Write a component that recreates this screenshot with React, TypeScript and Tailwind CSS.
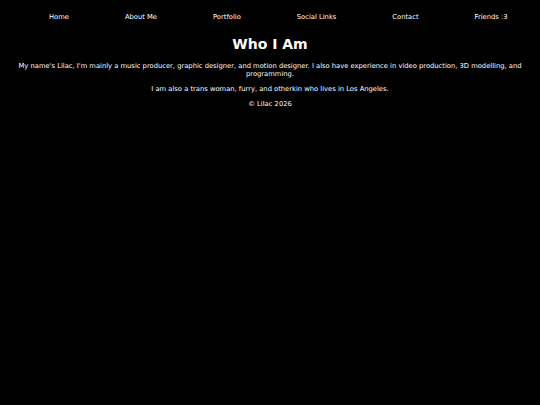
export default function App() {
  const links = ['Home', 'About Me', 'Portfolio', 'Social Links', 'Contact', 'Friends :3'];

  return (
    <div className="min-h-screen w-full bg-black text-white font-['Verdana','DejaVu_Sans',sans-serif]">
      {/* Nav */}
      <nav className="flex pl-[49px] pt-[13px] gap-[56px] text-[6.75px] leading-[8px]">
        {links.map((l) => (
          <a key={l} href="#" className="text-white no-underline whitespace-nowrap">
            {l}
          </a>
        ))}
      </nav>

      <main className="px-[8px] text-center">
        <h1 className="mt-[15px] text-[14px] leading-[16px] font-bold">Who I Am</h1>
        <p className="mt-[10px] text-[6.75px] leading-[8px]">
          My name's Lilac, I'm mainly a music producer, graphic designer, and motion designer. I also have
          experience in video production, 3D modelling, and programming.
        </p>
        <p className="mt-[7px] text-[6.75px] leading-[8px]">
          I am also a trans woman, furry, and otherkin who lives in Los Angeles.
        </p>
        <p className="mt-[7px] text-[6.75px] leading-[8px]">© Lilac 2026</p>
      </main>
    </div>
  );
}
